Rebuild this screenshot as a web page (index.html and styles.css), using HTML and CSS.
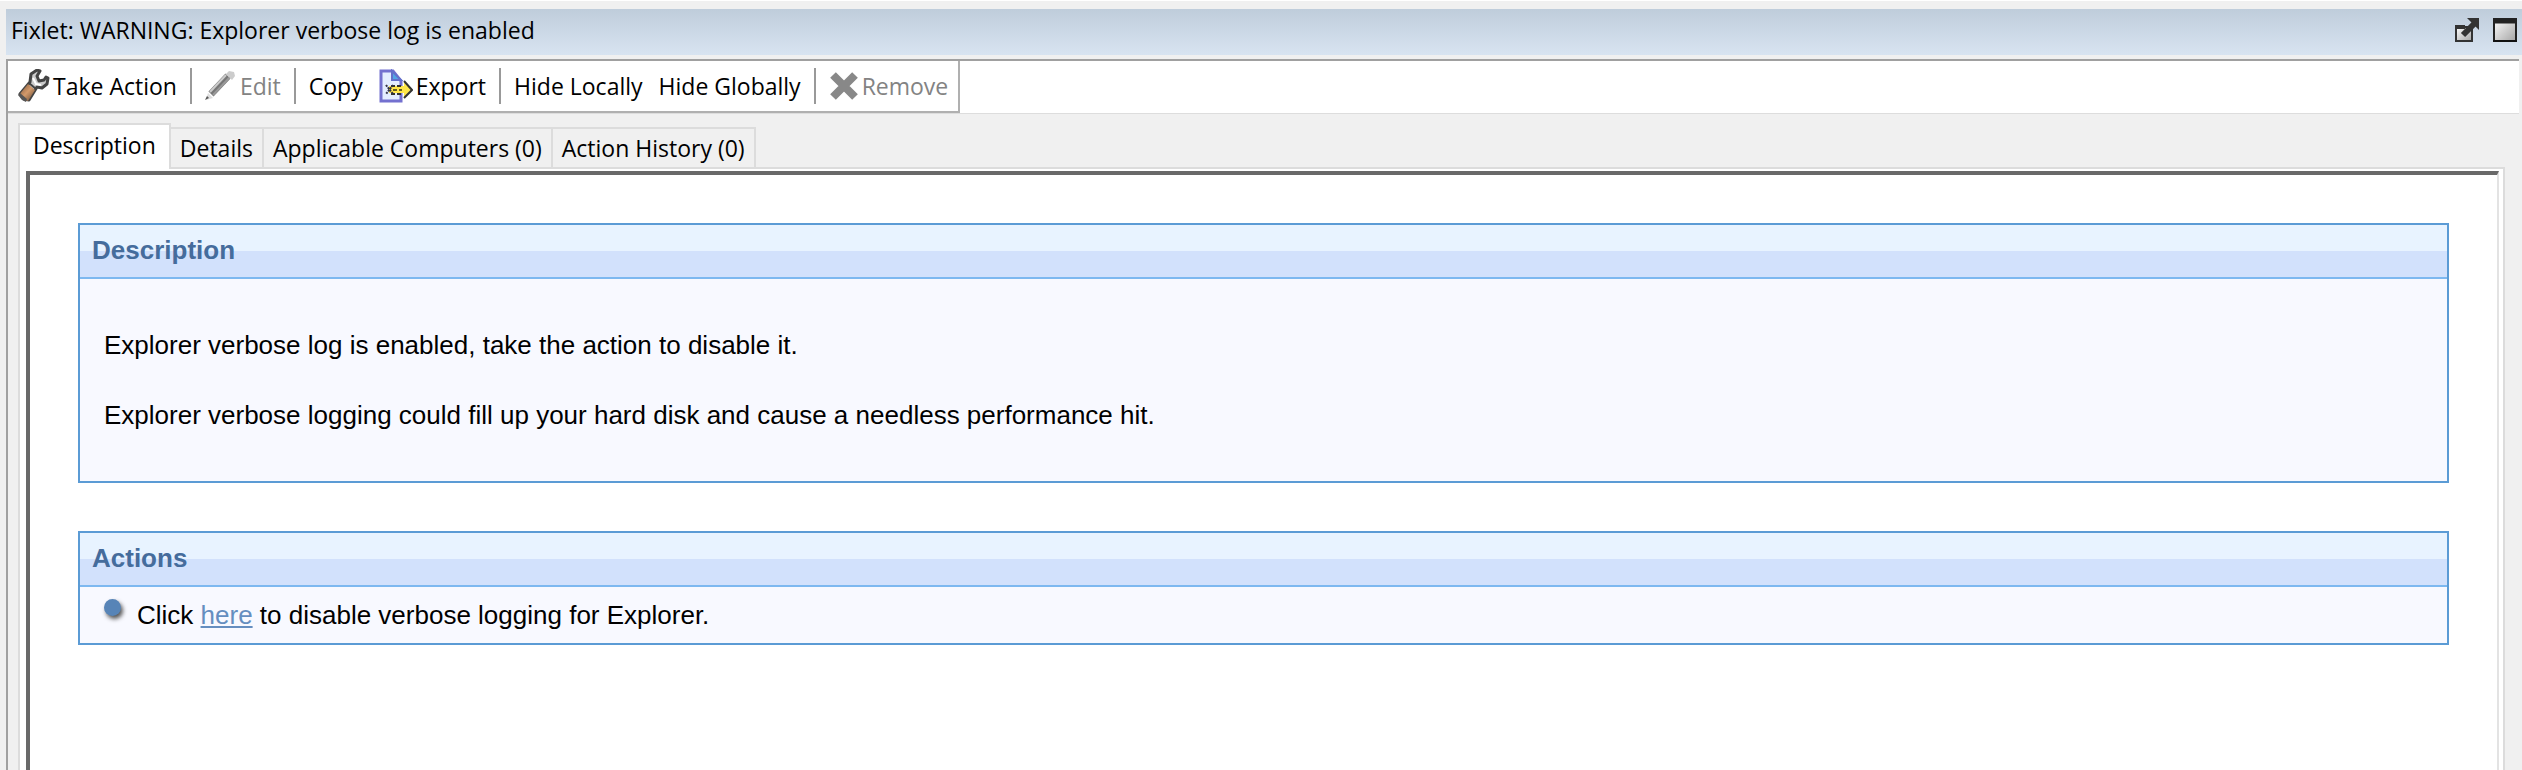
FILE: index.html
```
<!DOCTYPE html>
<html lang="en">
<head>
    <meta charset="UTF-8">
    <meta name="viewport" content="width=device-width, initial-scale=1.0">
    <title>Fixlet: WARNING: Explorer verbose log is enabled</title>
    <link rel="stylesheet" href="styles.css">
</head>
<body>
    <header class="titlebar">
        <h1>Fixlet: WARNING: Explorer verbose log is enabled</h1>
        <button class="window-button" aria-label="Open in new window">
            <svg width="26" height="26" viewBox="0 0 26 26">
                <defs>
                    <linearGradient id="pane" x1="0" y1="0" x2="1" y2="1">
                        <stop offset="0" stop-color="#fff"/>
                        <stop offset="1" stop-color="#a4a4a4"/>
                    </linearGradient>
                </defs>
                <rect x="2" y="10" width="16" height="14" fill="url(#pane)" stroke="#333" stroke-width="2"/>
                <path d="M1 10h10" stroke="#333" stroke-width="4"/>
                <path d="M9 18 20 7" stroke="#333" stroke-width="6"/>
                <path d="M13 1h12v12z" fill="#333"/>
            </svg>
        </button>
        <button class="window-button" aria-label="Maximize">
            <svg width="26" height="26" viewBox="0 0 26 26">
                <rect x="2" y="2" width="22" height="22" fill="url(#pane)" stroke="#222" stroke-width="2"/>
                <path d="M1 4h24" stroke="#222" stroke-width="5"/>
                <path d="M1 24h24" stroke="#111" stroke-width="2"/>
            </svg>
        </button>
    </header>

    <main class="window">
        <div class="toolbar-row">
            <div class="toolbar">
                <button class="tool">
                    <svg width="32" height="34" viewBox="1 0 32 34">
                        <defs>
                            <linearGradient id="handle" x1="0" y1="0" x2="1" y2="1">
                                <stop offset="0" stop-color="#765035"/>
                                <stop offset=".5" stop-color="#d39a6b"/>
                                <stop offset="1" stop-color="#5e4633"/>
                            </linearGradient>
                        </defs>
                        <path d="M13 13 14 5 20 1l3 1-3 5 2 5 5-1 2-3 2 1-1 6-5 4-5-1-8 13-5-1-4-5z" fill="#ccc" stroke="#444" stroke-width="3" stroke-linejoin="round"/>
                        <path d="m11 15 7 6-7 11-5-1-4-5z" fill="url(#handle)"/>
                        <path d="m3 24 7 6-1 3-4-2-4-5z" fill="#555"/>
                        <path d="m12 14 7 6" stroke="#444" stroke-width="2"/>
                        <path d="m16 9 3 6 5 1" fill="none" stroke="#fff" stroke-width="2"/>
                    </svg>
                    Take Action
                </button>
                <span class="separator"></span>
                <button class="tool" disabled>
                    <svg width="32" height="32" viewBox="0 0 32 32">
                        <path d="M6 24 23 6" stroke="#777" stroke-width="7"/>
                        <path d="M5 22 21 5" stroke="#ccc" stroke-width="2"/>
                        <path d="M8 25 25 7" stroke="#999" stroke-width="2"/>
                        <path d="m21 4 3-3 5 1 1 4-3 4z" fill="#ccc"/>
                        <path d="m3 23 5 5-7 2z" fill="#ddd"/>
                        <path d="m2 26 2 2-4 2z" fill="#555"/>
                    </svg>
                    Edit
                </button>
                <span class="separator"></span>
                <button class="tool">Copy</button>
                <button class="tool">
                    <svg width="34" height="34" viewBox="0 0 34 34">
                        <path d="M2 2h12l8 10v20H2z" fill="#e4edff" stroke="#7370cf" stroke-width="3"/>
                        <path d="M13 2v9h9z" fill="#52a5e4" stroke="#6470ca" stroke-width="2"/>
                        <path d="M10 17h15v-5l8 9-8 8v-5H10z" fill="#ffe64a"/>
                        <path d="M12 17h12M12 25h12" stroke="#333" stroke-width="2" stroke-dasharray="4 2"/>
                        <path d="m25 12 8 9-8 8" fill="none" stroke="#333" stroke-width="2"/>
                        <path d="m7 16 7 9m0-9-7 9" stroke="#334" stroke-width="2" stroke-dasharray="2 1"/>
                        <path d="M14 21h9" stroke="#665c20" stroke-width="2" stroke-dasharray="4 2"/>
                    </svg>
                    Export
                </button>
                <span class="separator"></span>
                <button class="tool">Hide Locally</button>
                <button class="tool">Hide Globally</button>
                <span class="separator"></span>
                <button class="tool" disabled>
                    <svg width="30" height="30" viewBox="0 0 30 30">
                        <path d="m4 4 22 22M26 4 4 26" stroke="#888" stroke-width="8"/>
                    </svg>
                    Remove
                </button>
            </div>
        </div>

        <div class="content">
            <div class="tabs" role="tablist">
                <button class="tab active" role="tab" aria-selected="true">Description</button>
                <button class="tab" role="tab" aria-selected="false">Details</button>
                <button class="tab" role="tab" aria-selected="false">Applicable Computers (0)</button>
                <button class="tab" role="tab" aria-selected="false">Action History (0)</button>
            </div>
            <div class="tab-page" role="tabpanel">
                <div class="document">
                    <section class="section">
                        <h2>Description</h2>
                        <div class="section-text">
                            <p>Explorer verbose log is enabled, take the action to disable it.</p>
                            <p>Explorer verbose logging could fill up your hard disk and cause a needless performance hit.</p>
                        </div>
                    </section>
                    <section class="section">
                        <h2>Actions</h2>
                        <ul class="actions">
                            <li><span class="bullet"></span><span>Click <a href="#">here</a> to disable verbose logging for Explorer.</span></li>
                        </ul>
                    </section>
                </div>
            </div>
        </div>
    </main>
</body>
</html>
```
FILE: styles.css
```
*, *::before, *::after {
    margin: 0;
    padding: 0;
    box-sizing: border-box;
}

body {
    display: flex;
    flex-direction: column;
    min-height: 100vh;
    padding: 8px 0 0 6px;
    border-top: 1px solid #fff;
    background-color: #f0f0f0;
    color: #000;
    font-family: 'Open Sans', 'Noto Sans', sans-serif;
    font-size: 23px;
}

button {
    border: none;
    background: none;
    color: inherit;
    font: inherit;
    white-space: nowrap;
}

svg {
    display: block;
    flex: none;
}

.titlebar {
    display: flex;
    align-items: center;
    gap: 12px;
    height: 46px;
    padding: 0 4px 4px 5px;
    background: linear-gradient(#bfcddb, #d8e4f1);
}

.titlebar h1 {
    flex: 1;
    font-size: 23px;
    font-weight: normal;
    line-height: 32px;
}

.window {
    display: flex;
    flex: 1;
    flex-direction: column;
    margin: 4px 3px 0 0;
    border-top: 2px solid #a0a0a0;
    border-left: 2px solid #a0a0a0;
}

.toolbar-row {
    border-bottom: 1px solid #ddd;
    background-color: #fff;
}

.toolbar {
    display: flex;
    align-items: center;
    width: max-content;
    height: 52px;
    padding: 0 2px;
    border-right: 2px solid #b0b0b0;
    border-bottom: 2px solid #b0b0b0;
}

.tool {
    display: flex;
    align-items: center;
    gap: 3px;
    padding: 0 8px;
    line-height: 32px;
}

.tool:disabled {
    color: #838383;
}

.separator {
    width: 2px;
    height: 36px;
    margin: 0 5px;
    background-color: #999;
}

.content {
    display: flex;
    flex: 1;
    flex-direction: column;
    padding: 9px 14px 0 10px;
}

.tabs {
    display: flex;
    align-items: flex-end;
}

.tab {
    height: 40px;
    padding: 0 9px;
    border: 2px solid #dcdcdc;
    border-bottom: none;
    border-left: none;
    line-height: 32px;
}

.tab.active {
    z-index: 1;
    height: 46px;
    margin-bottom: -2px;
    padding: 0 13px 4px;
    border-left: 2px solid #dcdcdc;
    background-color: #fff;
}

.tab-page {
    display: flex;
    flex: 1;
    padding: 2px 4px 0 6px;
    border: 2px solid #dcdcdc;
    border-bottom: none;
    background-color: #fff;
}

.document {
    flex: 1;
    padding: 48px 48px 0;
    border-top: 4px solid #696969;
    border-left: 4px solid #696969;
    border-right: 2px solid #e3e3e3;
    font-family: 'Liberation Sans', Arial, sans-serif;
    font-size: 26px;
}

.section {
    margin-bottom: 48px;
    border: 2px solid #5b9bd5;
    background-color: #f8f9ff;
}

.section h2 {
    height: 54px;
    padding: 0 12px;
    border-bottom: 2px solid #7db8f0;
    background: linear-gradient(#e8f3ff 50%, #d2e1fc 50%);
    color: #456c9c;
    font-size: 26px;
    line-height: 50px;
}

.section-text {
    display: grid;
    gap: 35px;
    padding: 49px 24px 48px;
    line-height: 35px;
}

.actions {
    padding: 12px 24px;
    line-height: 32px;
    list-style: none;
}

.actions li {
    display: flex;
    gap: 16px;
}

.actions a {
    color: #658ec0;
}

.bullet {
    width: 17px;
    height: 17px;
    border-radius: 50%;
    background-color: #5784b7;
    box-shadow: 2px 3px 4px #555;
}
```
